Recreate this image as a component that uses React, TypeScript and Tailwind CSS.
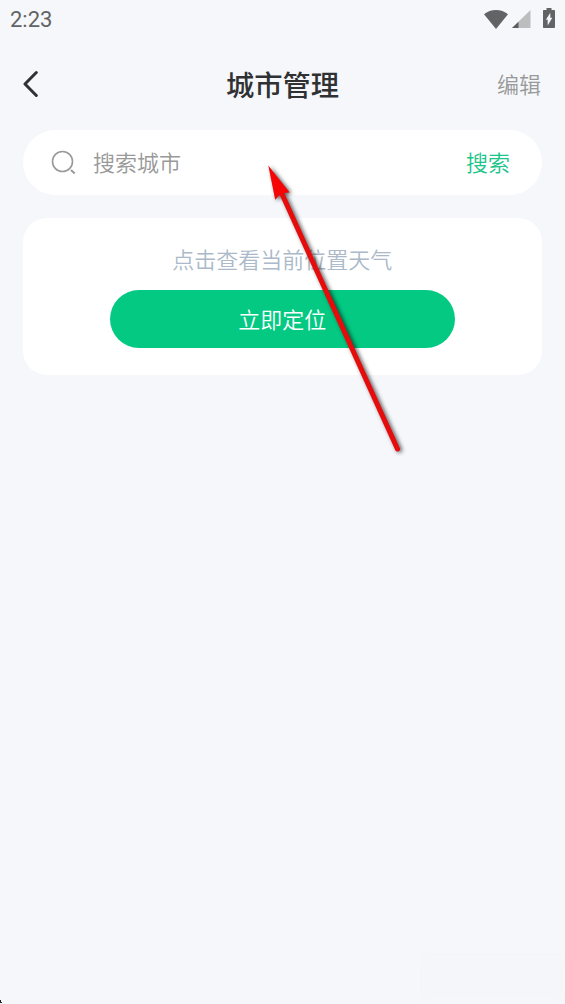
interface IconProps {
  className?: string;
}

const WifiIcon = ({ className }: IconProps) => (
  <svg width="24" height="19" viewBox="0 0 24 19" className={className}>
    <path d="M0 4.3C3.3 1.5 7.5 0 12 0s8.700 1.500 12 4.300L12 19z" fill="#626365" />
  </svg>
);

const SignalIcon = ({ className }: IconProps) => (
  <svg width="19" height="18" viewBox="0 0 19 18" className={className}>
    <path d="M18.500 0v18H0z" fill="#bcbdbf" />
    <path d="M6.500 11.700V18H0z" fill="#5c5d5f" />
  </svg>
);

const BatteryIcon = ({ className }: IconProps) => (
  <svg width="12" height="20" viewBox="0 0 12 20" className={className}>
    <path
      d="M3.500 0h5v2h2.500c.6 0 1 .4 1 1v16c0 .6-.4 1-1 1H1c-.6 0-1-.4-1-1V3c0-.6.4-1 1-1h2.500z"
      fill="#626365"
    />
    <path d="M7.300 4.700v5h2L4.700 17.500v-5.700H2.900z" fill="#f5f7fb" />
  </svg>
);

const BackIcon = ({ className }: IconProps) => (
  <svg width="16" height="28" viewBox="0 0 16 28" className={className}>
    <path
      d="M13.300 2.500L2 14l11.300 11.500"
      fill="none"
      stroke="#303133"
      strokeWidth="3"
      strokeLinecap="round"
      strokeLinejoin="round"
    />
  </svg>
);

const SearchIcon = ({ className }: IconProps) => (
  <svg width="26" height="26" viewBox="0 0 26 26" className={className}>
    <g fill="none" stroke="#999">
      <circle cx="11.500" cy="11.500" r="10" strokeWidth="1.600" />
      <path d="M20 20l3.700 3.400" strokeWidth="2" />
    </g>
  </svg>
);

const StatusBar = () => (
  <div className="flex h-[38px] items-center justify-between pr-[10px] pl-[10px] text-[#626365]">
    <span className="pt-[2px] font-['Roboto',sans-serif] text-[22px] leading-none font-normal">2:23</span>
    <div className="flex items-center">
      <WifiIcon />
      <SignalIcon className="ml-[4px]" />
      <BatteryIcon className="ml-[12px] -translate-y-px" />
    </div>
  </div>
);

const Header = () => (
  <header className="grid h-[92px] grid-cols-3 items-center px-6">
    <button aria-label="返回" className="justify-self-start">
      <BackIcon className="-ml-px" />
    </button>
    <h1 className="justify-self-center text-[28.3px] leading-none font-medium whitespace-nowrap text-[#303133]">
      城市管理
    </h1>
    <button className="justify-self-end pb-[3px] text-[22px] leading-none text-[#999]">编辑</button>
  </header>
);

const SearchBar = () => (
  <div className="mr-[23.5px] ml-[23px] flex h-[64.5px] items-center rounded-full bg-white pr-[31.5px] pl-[28px] text-[22px] leading-none">
    <SearchIcon className="mt-[2px]" />
    <span className="ml-4 flex-1 pb-[2px] text-[#999]">搜索城市</span>
    <button className="pb-[2px] text-[#1cc58a]">搜索</button>
  </div>
);

const LocationCard = () => (
  <section className="mr-[23.5px] ml-[23px] mt-[23.5px] flex h-[157px] flex-col items-center rounded-[24px] bg-white pt-[29px] text-[22px]">
    <p className="leading-[22px] text-[#abb9c9]">点击查看当前位置天气</p>
    <button className="mt-[21px] h-[58px] w-[345px] rounded-full bg-[#03c983] pb-[2px] leading-none text-white">
      立即定位
    </button>
  </section>
);

// Pointer drawn over the page, aimed at the search field
const Arrow = () => (
  <svg
    width="150"
    height="305"
    viewBox="260 155 150 305"
    className="pointer-events-none absolute top-[155px] left-[260px] drop-shadow-[2px_1px_2px_rgba(0,0,0,0.65)]">
    <path d="M282 194L397.500 449" stroke="#e60c0c" strokeWidth="5" strokeLinecap="round" />
    <path d="M268.300 165.500l21.400 27-6 .5-4.500 2.500-4 4.200z" fill="#f50505" />
  </svg>
);

export default function App() {
  return (
    <div className="relative h-[1004px] w-[565px] overflow-hidden bg-[#f5f7fb] font-['Noto_Sans_CJK_SC',sans-serif] font-[350]">
      <StatusBar />
      <Header />
      <SearchBar />
      <LocationCard />
      <Arrow />
      <div className="absolute right-0 bottom-1 h-[44px] w-[142px] bg-[#f5f6f9] blur-[3px]" />
      <svg width="3" height="4" viewBox="0 0 3 4" className="absolute bottom-0 left-0">
        <path d="M0 0h1v2h1v1H0z" fill="#222" />
      </svg>
    </div>
  );
}
